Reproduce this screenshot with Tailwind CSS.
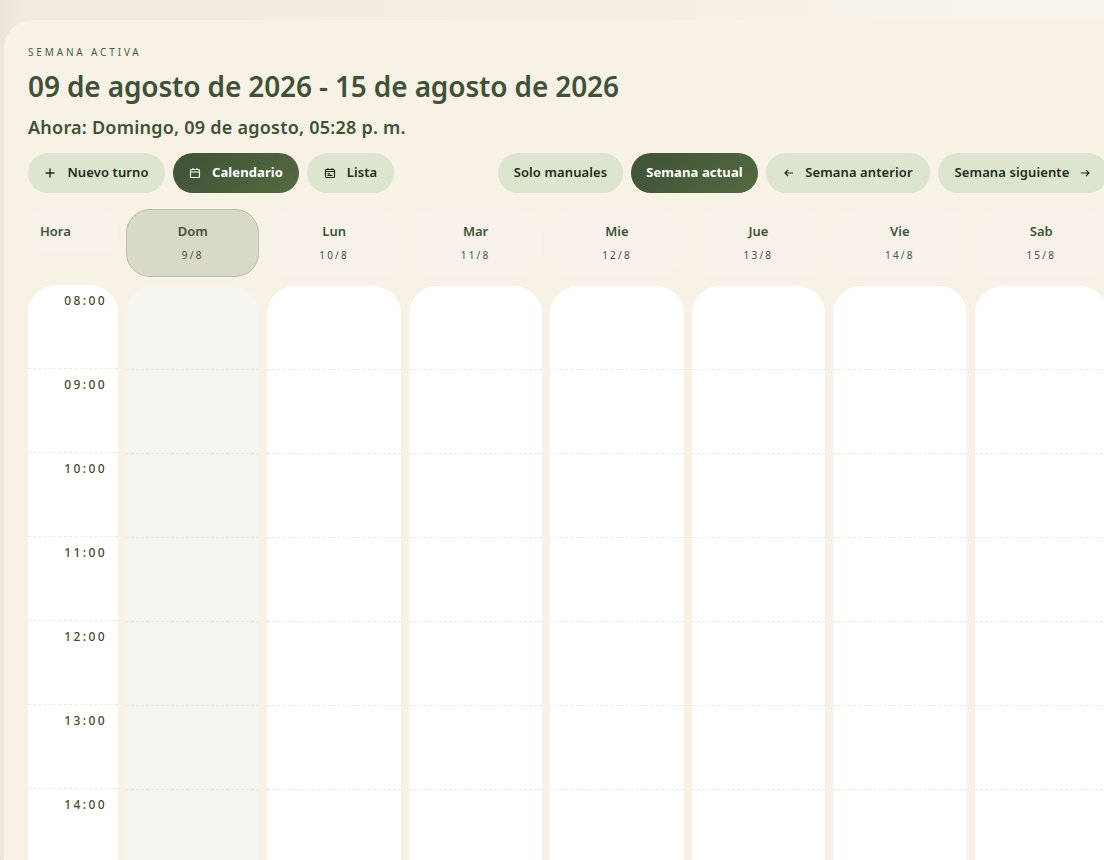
<!DOCTYPE html>
<html lang="es">
<head>
    <meta charset="UTF-8">
    <title>Semana activa</title>
    <script src="https://cdn.jsdelivr.net/npm/@tailwindcss/browser@4"></script>
</head>
<body class="h-[860px] overflow-hidden bg-[linear-gradient(90deg,#e9e5d8_0px,#f3ebdd_24px,#f6eee2_60%,#f7f4ee_90%)] font-['Noto_Sans',sans-serif] text-[#3f5236]">
    <main class="ml-[4px] mt-[20px] w-[1240px] h-[900px] rounded-tl-[28px] bg-[#f8f1e6] pl-[24px] pt-[24px]">
        <div class="w-[1080px]">
            <p class="text-[10px] leading-[16px] tracking-[0.285em] text-[#4a5d40]">SEMANA ACTIVA</p>
            <h1 class="mt-[8px] text-[28px] leading-[36px] font-semibold tracking-[-0.005em]">09 de agosto de 2026 - 15 de agosto de 2026</h1>
            <p class="mt-[9px] text-[18px] leading-[28px] font-semibold tracking-[0.013em]">Ahora: Domingo, 09 de agosto, 05:28 p. m.</p>

            <!-- Toolbar -->
            <div class="mt-[12px] flex justify-between text-[13px] font-semibold tracking-[0.008em] text-[#1f2a1a]">
                <div class="flex gap-[8px]">
                    <button class="h-[40px] w-[137px] rounded-full bg-[#dce6ce] flex items-center justify-center gap-[11px]">
                        <svg class="w-[12px] h-[12px]" viewBox="0 0 12 12" fill="none" stroke="currentColor" stroke-width="1.4"><path d="M6 1.5v9M1.5 6h9"/></svg>
                        Nuevo turno
                    </button>
                    <button class="h-[40px] w-[126px] rounded-full bg-[linear-gradient(135deg,#3f5236,#536a40)] text-white flex items-center justify-center gap-[11px] font-bold">
                        <svg class="w-[12px] h-[12px]" viewBox="0 0 12 12" fill="none" stroke="currentColor" stroke-width="1.1"><rect x="1.5" y="2.5" width="9" height="8" rx="1"/><path d="M1.5 5h9M4 1v2M8 1v2"/></svg>
                        Calendario
                    </button>
                    <button class="h-[40px] w-[87px] rounded-full bg-[#dce6ce] flex items-center justify-center gap-[11px]">
                        <svg class="w-[12px] h-[12px]" viewBox="0 0 12 12" fill="none" stroke="currentColor" stroke-width="1.2"><rect x="1.5" y="2.5" width="9" height="8" rx="1"/><path d="M1.5 4.5h9M4 1v2M8 1v2M3.5 6.6h2.5M3.5 8.4h5"/></svg>
                        Lista
                    </button>
                </div>
                <div class="flex gap-[8px]">
                    <button class="h-[40px] w-[125px] rounded-full bg-[#dce6ce]">Solo manuales</button>
                    <button class="h-[40px] w-[127px] rounded-full bg-[linear-gradient(135deg,#3f5236,#536a40)] text-white font-bold">Semana actual</button>
                    <button class="h-[40px] w-[164px] rounded-full bg-[#dce6ce] flex items-center justify-center gap-[10px]">
                        <svg class="w-[12px] h-[12px]" viewBox="0 0 12 12" fill="none" stroke="currentColor" stroke-width="1.2"><path d="M10 6H2M5 3 2 6l3 3"/></svg>
                        Semana anterior
                    </button>
                    <button class="h-[40px] w-[170px] rounded-full bg-[#dce6ce] flex items-center justify-center gap-[10px]">
                        Semana siguiente
                        <svg class="w-[12px] h-[12px]" viewBox="0 0 12 12" fill="none" stroke="currentColor" stroke-width="1.2"><path d="M2 6h8M7 3l3 3-3 3"/></svg>
                    </button>
                </div>
            </div>

            <!-- Header row -->
            <div class="mt-[16px] grid grid-cols-[90px_repeat(7,1fr)] gap-x-[8px] items-start">
                <div class="h-[44px] rounded-[20px] bg-[#f9f2ea] pl-[12px] pt-[12px] text-[13px] leading-[20px] font-semibold">Hora</div>
                <div class="h-[68px] rounded-[24px] border border-[#b9bfa8] bg-[#d8d9c6] text-center pt-[11px]">
                    <p class="text-[13px] leading-[20px] font-semibold">Dom</p>
                    <p class="mt-[6px] text-[10px] leading-[16px] tracking-[0.22em]">9/8</p>
                </div>
                <div class="h-[68px] rounded-[24px] bg-[#f9f2ea] text-center pt-[12px]">
                    <p class="text-[13px] leading-[20px] font-semibold">Lun</p>
                    <p class="mt-[6px] text-[10px] leading-[16px] tracking-[0.22em]">10/8</p>
                </div>
                <div class="h-[68px] rounded-[24px] bg-[#f9f2ea] text-center pt-[12px]">
                    <p class="text-[13px] leading-[20px] font-semibold">Mar</p>
                    <p class="mt-[6px] text-[10px] leading-[16px] tracking-[0.22em]">11/8</p>
                </div>
                <div class="h-[68px] rounded-[24px] bg-[#f9f2ea] text-center pt-[12px]">
                    <p class="text-[13px] leading-[20px] font-semibold">Mie</p>
                    <p class="mt-[6px] text-[10px] leading-[16px] tracking-[0.22em]">12/8</p>
                </div>
                <div class="h-[68px] rounded-[24px] bg-[#f9f2ea] text-center pt-[12px]">
                    <p class="text-[13px] leading-[20px] font-semibold">Jue</p>
                    <p class="mt-[6px] text-[10px] leading-[16px] tracking-[0.22em]">13/8</p>
                </div>
                <div class="h-[68px] rounded-[24px] bg-[#f9f2ea] text-center pt-[12px]">
                    <p class="text-[13px] leading-[20px] font-semibold">Vie</p>
                    <p class="mt-[6px] text-[10px] leading-[16px] tracking-[0.22em]">14/8</p>
                </div>
                <div class="h-[68px] rounded-[24px] bg-[#f9f2ea] text-center pt-[12px]">
                    <p class="text-[13px] leading-[20px] font-semibold">Sab</p>
                    <p class="mt-[6px] text-[10px] leading-[16px] tracking-[0.22em]">15/8</p>
                </div>
            </div>

            <!-- Hours -->
            <div class="mt-[8px] grid grid-cols-[90px_repeat(7,1fr)] gap-x-[8px] items-start">
                <div class="rounded-t-[28px] bg-white text-[12px] leading-[16px] font-medium tracking-[0.2em] text-right text-[#3f4a36]">
                    <div class="h-[84px] pr-[11px] pt-[8px] border-b border-dashed border-[#ece9de]">08:00</div>
                    <div class="h-[84px] pr-[11px] pt-[8px] border-b border-dashed border-[#ece9de]">09:00</div>
                    <div class="h-[84px] pr-[11px] pt-[8px] border-b border-dashed border-[#ece9de]">10:00</div>
                    <div class="h-[84px] pr-[11px] pt-[8px] border-b border-dashed border-[#ece9de]">11:00</div>
                    <div class="h-[84px] pr-[11px] pt-[8px] border-b border-dashed border-[#ece9de]">12:00</div>
                    <div class="h-[84px] pr-[11px] pt-[8px] border-b border-dashed border-[#ece9de]">13:00</div>
                    <div class="h-[84px] pr-[11px] pt-[8px]">14:00</div>
                </div>
                <div class="mt-[1px] rounded-t-[28px] bg-[#f5f4ef] h-[600px] overflow-hidden divide-y divide-dashed divide-[#ece9de]">
                    <div class="h-[84px]"></div><div class="h-[84px]"></div><div class="h-[84px]"></div><div class="h-[84px]"></div><div class="h-[84px]"></div><div class="h-[84px]"></div><div class="h-[84px]"></div>
                </div>
                <div class="mt-[1px] rounded-t-[28px] bg-white h-[600px] overflow-hidden divide-y divide-dashed divide-[#ece9de]">
                    <div class="h-[84px]"></div><div class="h-[84px]"></div><div class="h-[84px]"></div><div class="h-[84px]"></div><div class="h-[84px]"></div><div class="h-[84px]"></div><div class="h-[84px]"></div>
                </div>
                <div class="mt-[1px] rounded-t-[28px] bg-white h-[600px] overflow-hidden divide-y divide-dashed divide-[#ece9de]">
                    <div class="h-[84px]"></div><div class="h-[84px]"></div><div class="h-[84px]"></div><div class="h-[84px]"></div><div class="h-[84px]"></div><div class="h-[84px]"></div><div class="h-[84px]"></div>
                </div>
                <div class="mt-[1px] rounded-t-[28px] bg-white h-[600px] overflow-hidden divide-y divide-dashed divide-[#ece9de]">
                    <div class="h-[84px]"></div><div class="h-[84px]"></div><div class="h-[84px]"></div><div class="h-[84px]"></div><div class="h-[84px]"></div><div class="h-[84px]"></div><div class="h-[84px]"></div>
                </div>
                <div class="mt-[1px] rounded-t-[28px] bg-white h-[600px] overflow-hidden divide-y divide-dashed divide-[#ece9de]">
                    <div class="h-[84px]"></div><div class="h-[84px]"></div><div class="h-[84px]"></div><div class="h-[84px]"></div><div class="h-[84px]"></div><div class="h-[84px]"></div><div class="h-[84px]"></div>
                </div>
                <div class="mt-[1px] rounded-t-[28px] bg-white h-[600px] overflow-hidden divide-y divide-dashed divide-[#ece9de]">
                    <div class="h-[84px]"></div><div class="h-[84px]"></div><div class="h-[84px]"></div><div class="h-[84px]"></div><div class="h-[84px]"></div><div class="h-[84px]"></div><div class="h-[84px]"></div>
                </div>
                <div class="mt-[1px] rounded-t-[28px] bg-white h-[600px] overflow-hidden divide-y divide-dashed divide-[#ece9de]">
                    <div class="h-[84px]"></div><div class="h-[84px]"></div><div class="h-[84px]"></div><div class="h-[84px]"></div><div class="h-[84px]"></div><div class="h-[84px]"></div><div class="h-[84px]"></div>
                </div>
            </div>
        </div>
    </main>
</body>
</html>
